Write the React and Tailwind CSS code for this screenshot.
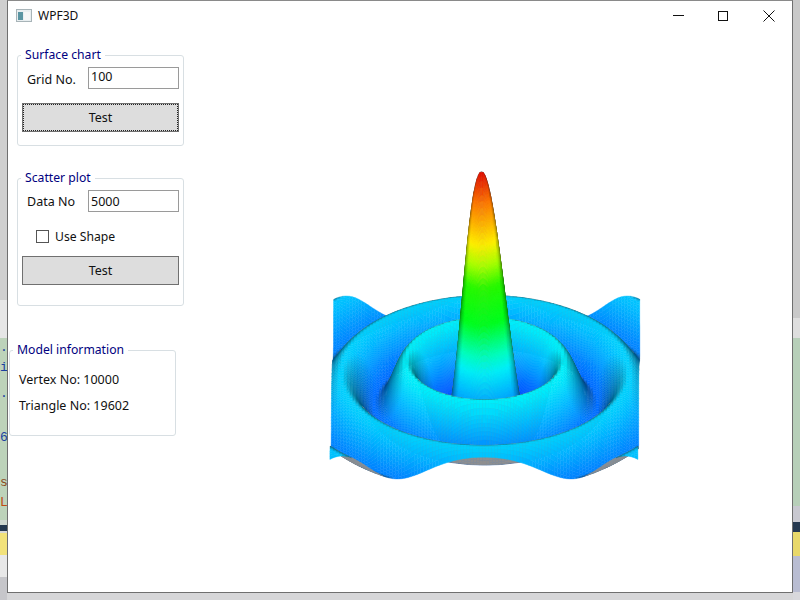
import { useMemo } from 'react';

const FONT = "font-['Noto_Sans',sans-serif]";

// height -> colour stops read off the reference
const STOPS = [
  [-0.217, 0, 40, 255],
  [-0.15, 0, 80, 255],
  [-0.09, 0, 110, 255],
  [-0.03, 0, 150, 255],
  [0.03, 0, 185, 255],
  [0.128, 0, 240, 250],
  [0.2, 0, 255, 190],
  [0.34, 0, 255, 30],
  [0.5, 40, 250, 0],
  [0.6, 170, 255, 0],
  [0.69, 255, 240, 0],
  [0.87, 255, 120, 0],
  [1, 225, 10, 0],
];

function colour(z, light) {
  let k = 0;
  while (k < STOPS.length - 2 && z > STOPS[k + 1][0]) k++;
  const a = STOPS[k];
  const b = STOPS[k + 1];
  const t = Math.max(0, Math.min(1, (z - a[0]) / (b[0] - a[0])));
  const c = (i) => Math.round((a[i] + (b[i] - a[i]) * t) * light);
  return `rgb(${c(1)},${c(2)},${c(3)})`;
}

function height(u, v) {
  const r = 15 * Math.hypot(u, v);
  return r < 1e-6 ? 1 : Math.sin(r) / r;
}

function project(u, v) {
  const z = height(u, v);
  return {
    x: 486.5 + u * (153.5 - 0.5 * v) + 1.5 * v - 4 * z - 320,
    y: 386.5 - 80 * v - 215 * z - 160,
    z,
  };
}

function pushFace(faces, u0, v0, u1, v1) {
  const a = project(u0, v0);
  const b = project(u1, v0);
  const c = project(u1, v1);
  const d = project(u0, v1);
  const area = (c.x - a.x) * (d.y - b.y) - (c.y - a.y) * (d.x - b.x);
  const z = (a.z + b.z + c.z + d.z) / 4;
  // normal against the view direction, model sized in screen pixels
  const gu = ((b.z - a.z + c.z - d.z) / 2) * 252 / ((u1 - u0) * 153);
  const gv = ((d.z - a.z + c.z - b.z) / 2) * 252 / ((v1 - v0) * 153);
  const len = Math.hypot(gu, gv, 1);
  const dot = Math.max(0, (gv * 0.845 + 0.535) / len);
  const light = Math.min(1, 0.5 + 0.95 * dot);
  faces.push({
    key: faces.length,
    points: [a, b, c, d].map((p) => `${p.x.toFixed(1)},${p.y.toFixed(1)}`).join(' '),
    fill: area > 0 ? colour(z, light) : '#8f8f8f',
  });
}

// 100 x 100 grid, cells on the steep peak are split so the colour runs smooth
function buildFaces() {
  const n = 99;
  const s = 2 / n;
  const faces = [];
  for (let j = 0; j < n; j++) {
    const v0 = 1 - j * s;
    for (let i = 0; i < n; i++) {
      const u0 = -1 + i * s;
      const zs = [height(u0, v0), height(u0 + s, v0), height(u0, v0 - s), height(u0 + s, v0 - s)];
      const span = Math.max(...zs) - Math.min(...zs);
      const k = Math.min(6, Math.ceil(span / 0.03));
      for (let q = 0; q < k; q++) {
        for (let p = 0; p < k; p++) {
          pushFace(
            faces,
            u0 + (p * s) / k,
            v0 - (q * s) / k,
            u0 + ((p + 1) * s) / k,
            v0 - ((q + 1) * s) / k,
          );
        }
      }
    }
  }
  return faces;
}

function SurfaceChart() {
  const faces = useMemo(buildFaces, []);
  return (
    <svg width="330" height="330" viewBox="0 0 330 330" className="block">
      {faces.map((f) => (
        <polygon key={f.key} points={f.points} fill={f.fill} stroke={f.fill} strokeWidth="0.4" />
      ))}
    </svg>
  );
}

function GroupBox({ title, className, children }) {
  return (
    <div className={`rounded-[3px] border border-[#d8dfe3] ${className}`}>
      <div className="-mt-[10px] ml-[3px] w-fit bg-white px-1 text-[12.2px] leading-[17px] text-[#000080]">
        {title}
      </div>
      {children}
    </div>
  );
}

function Field({ label, value, labelClass, valueClass }) {
  return (
    <div className="flex items-center pl-[9px] pr-1">
      <span className={`w-[61px] text-[12.5px] leading-[17px] text-[#111] ${labelClass}`}>{label}</span>
      <div className={`h-[22px] w-[91px] border border-[#9a9a9a] pl-[2px] text-[12.5px] leading-[17px] text-[#111] ${valueClass}`}>
        {value}
      </div>
    </div>
  );
}

function Strip({ bands, className }) {
  return (
    <div className={`flex shrink-0 flex-col overflow-hidden ${className}`}>
      {bands.map(([h, bg, text, tc], i) => (
        <div key={i} className={`${h} ${bg} ${tc} whitespace-nowrap text-right text-[13px] leading-[20px] font-['Liberation_Mono',monospace]`}>
          {text}
        </div>
      ))}
    </div>
  );
}

export default function App() {
  return (
    <div className={`flex h-[600px] w-[800px] overflow-hidden bg-[#d6d6d8] ${FONT}`}>
      <Strip
        className="w-[7px]"
        bands={[
          ['h-[300px]', 'bg-[#cfcfcf]'],
          ['h-[38px]', 'bg-[#e6e6e6]'],
          ['h-[20px]', 'bg-[#bdd3ba]', '.', 'text-[#1a3fa0]'],
          ['h-[26px]', 'bg-[#bdd3ba]', 'i', 'text-[#1a3fa0]'],
          ['h-[44px]', 'bg-[#bdd3ba]', '.', 'text-[#1a3fa0]'],
          ['h-[45px]', 'bg-[#bdd3ba]', '6', 'text-[#1a3fa0]'],
          ['h-[20px]', 'bg-[#bdd3ba]', 's', 'text-[#8a4a20]'],
          ['h-[27px]', 'bg-[#bdd3ba]', 'L', 'text-[#c04a10]'],
          ['h-[5px]', 'bg-[#d0d8d0]'],
          ['h-[6px]', 'bg-[#25384f]'],
          ['h-[2px]', 'bg-[#d8d8d8]'],
          ['h-[22px]', 'bg-[#f2e27a]'],
          ['h-[22px]', 'bg-[#e8e8e8]'],
          ['h-[23px]', 'bg-[#c6c6ca]'],
        ]}
      />
      <div className="flex h-[593px] w-[786px] shrink-0 flex-col border border-[#6f6f6f] border-t-[#8a8a8a] bg-white">
        <div className="flex h-[30px] shrink-0 items-center">
          <svg width="16" height="16" viewBox="0 0 16 16" className="ml-[8px]">
            <rect x="0.5" y="1.5" width="15" height="12" fill="#e8eef0" stroke="#a8b4b8" />
            <rect x="2" y="4" width="5" height="8" fill="#5a95a2" />
            <rect x="8" y="4" width="6" height="8" fill="#f4f6f6" />
          </svg>
          <span className="ml-[6px] text-[12px] text-[#111]">WPF3D</span>
          <div className="ml-auto flex h-full">
            <button className="flex w-[46px] items-center justify-center pl-[2px]">
              <svg width="11" height="10" viewBox="0 0 11 10">
                <path d="M0 4.5h11" stroke="#111" fill="none" />
              </svg>
            </button>
            <button className="flex w-[46px] items-center justify-center">
              <svg width="10" height="10" viewBox="0 0 10 10">
                <rect x="0.5" y="0.5" width="9" height="9" stroke="#111" fill="none" />
              </svg>
            </button>
            <button className="flex w-[46px] items-center justify-center">
              <svg width="12" height="12" viewBox="0 0 12 12">
                <path d="M0.5 0.5l11 11M11.5 0.5l-11 11" stroke="#111" fill="none" />
              </svg>
            </button>
          </div>
        </div>
        <div className="flex min-h-0 flex-1">
          <div className="flex w-[177px] shrink-0 flex-col">
            <GroupBox title="Surface chart" className="ml-[9px] mt-[24px] h-[91px] w-[167px]">
              <div className="pt-[4px]">
                <Field label="Grid No." value="100" labelClass="mt-[3px]" />
              </div>
              <button className="mx-[4px] mt-[14px] block h-[29px] w-[157px] border border-[#707070] bg-[#dddddd] pt-[1px] text-[12.5px] text-[#111] outline-1 -outline-offset-2 outline-dotted outline-[#222]">
                Test
              </button>
            </GroupBox>
            <GroupBox title="Scatter plot" className="ml-[9px] mt-[32px] h-[128px] w-[167px]">
              <div className="pt-[4px]">
                <Field label="Data No" value="5000" labelClass="mt-[1px]" valueClass="pt-[2px]" />
              </div>
              <label className="ml-[18px] mt-[16px] flex items-center gap-[6px] text-[12.2px] leading-[17px] text-[#111]">
                <span className="h-[13px] w-[13px] border border-[#555]" />
                Use Shape
              </label>
              <button className="mx-[4px] mt-[11px] block h-[29px] w-[157px] border border-[#707070] bg-[#dddddd] pt-[1px] text-[12.5px] text-[#111]">
                Test
              </button>
            </GroupBox>
            <GroupBox title="Model information" className="ml-[1px] mt-[44px] h-[86px] w-[167px]">
              <div className="pl-[9px] pt-[13px] text-[12.5px] leading-[17px] text-[#111]">Vertex No: 10000</div>
              <div className="pl-[9px] pt-[9px] text-[12.5px] leading-[17px] text-[#111]">Triangle No: 19602</div>
            </GroupBox>
          </div>
          <div className="ml-[134px] mt-[129px]">
            <SurfaceChart />
          </div>
        </div>
      </div>
      <Strip
        className="w-[7px]"
        bands={[
          ['h-[318px]', 'bg-[#c9c9c9]'],
          ['h-[20px]', 'bg-[#dedede]'],
          ['h-[168px]', 'bg-[#b7cfb9]'],
          ['h-[16px]', 'bg-[#c8c8d0]'],
          ['h-[10px]', 'bg-[#25384f]'],
          ['h-[24px]', 'bg-[#e8d86a]'],
          ['h-[36px]', 'bg-[#b9bdd2]'],
          ['h-[8px]', 'bg-[#d8d8dc]'],
        ]}
      />
    </div>
  );
}
